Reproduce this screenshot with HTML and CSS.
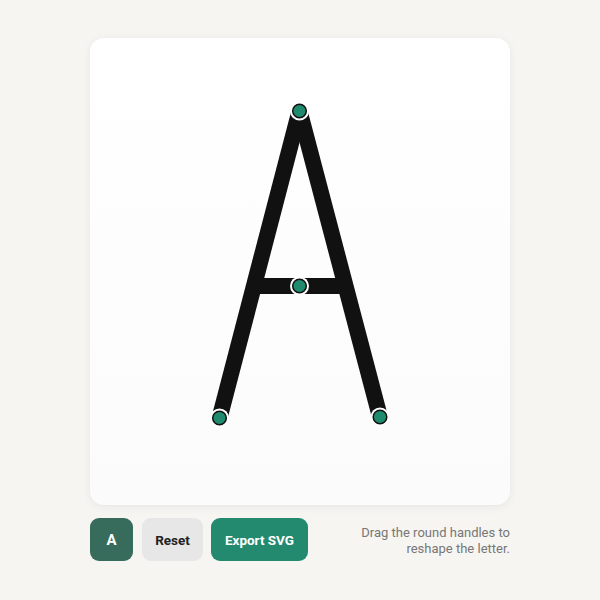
FILE: index.html
```html
<!DOCTYPE html>
<html>
<head>
<meta charset="utf-8">
<link rel="stylesheet" href="styles.css">
</head>
<body>
<div class="app">
  <div class="card">
    <svg class="canvas" width="420" height="467" viewBox="0 0 420 467">
      <g class="strokes">
        <line x1="209.5" y1="73" x2="129.5" y2="380"/>
        <line x1="209.5" y1="73" x2="290" y2="379"/>
        <line x1="163" y1="248" x2="256" y2="248"/>
      </g>
      <g class="handle"><circle class="ring" cx="209.5" cy="73" r="9.5"/><circle class="dot" cx="209.5" cy="73" r="6.8"/></g>
      <g class="handle"><circle class="ring" cx="209.5" cy="248" r="9.5"/><circle class="dot" cx="209.5" cy="248" r="6.8"/></g>
      <g class="handle"><circle class="ring" cx="129.5" cy="380" r="9.5"/><circle class="dot" cx="129.5" cy="380" r="6.8"/></g>
      <g class="handle"><circle class="ring" cx="290" cy="379" r="9.5"/><circle class="dot" cx="290" cy="379" r="6.8"/></g>
    </svg>
  </div>
  <div class="controls">
    <button class="btn btn-letter">A</button>
    <button class="btn btn-reset">Reset</button>
    <button class="btn btn-export">Export SVG</button>
    <p class="hint">Drag the round handles to<br>reshape the letter.</p>
  </div>
</div>
</body>
</html>
```

FILE: styles.css
```css
html, body {
  margin: 0;
  padding: 0;
  background: #f6f5f2;
  font-family: Roboto, "Liberation Sans", sans-serif;
}
.app {
  width: 420px;
  margin: 38px auto 0;
}
.card {
  width: 420px;
  height: 467px;
  border-radius: 14px;
  background: linear-gradient(#ffffff, #fbfbfb);
  box-shadow: 0 2px 10px rgba(0,0,0,0.06), 0 0 1px rgba(0,0,0,0.05);
}
.canvas {
  display: block;
}
.strokes line {
  stroke: #111111;
  stroke-width: 16;
  stroke-linecap: butt;
}
.ring {
  fill: #ffffff;
}
.dot {
  fill: #1f8a6d;
  stroke: #111111;
  stroke-width: 1.5;
}
.controls {
  display: flex;
  align-items: center;
  margin-top: 13px;
}
.btn {
  height: 43px;
  border: none;
  border-radius: 9px;
  font-family: Roboto, "Liberation Sans", sans-serif;
  font-weight: 700;
  font-size: 13.5px;
  padding: 0;
  margin-right: 8px;
}
.btn-letter {
  width: 43px;
  background: #376b5b;
  color: #ffffff;
  font-size: 15px;
  margin-right: 9px;
}
.btn-reset {
  width: 61px;
  background: #e7e7e7;
  color: #222222;
}
.btn-export {
  width: 97px;
  background: #238a70;
  color: #ffffff;
}
.hint {
  flex: 1;
  margin: 0;
  padding-top: 2px;
  text-align: right;
  font-size: 13px;
  line-height: 16px;
  color: #777777;
}
```
